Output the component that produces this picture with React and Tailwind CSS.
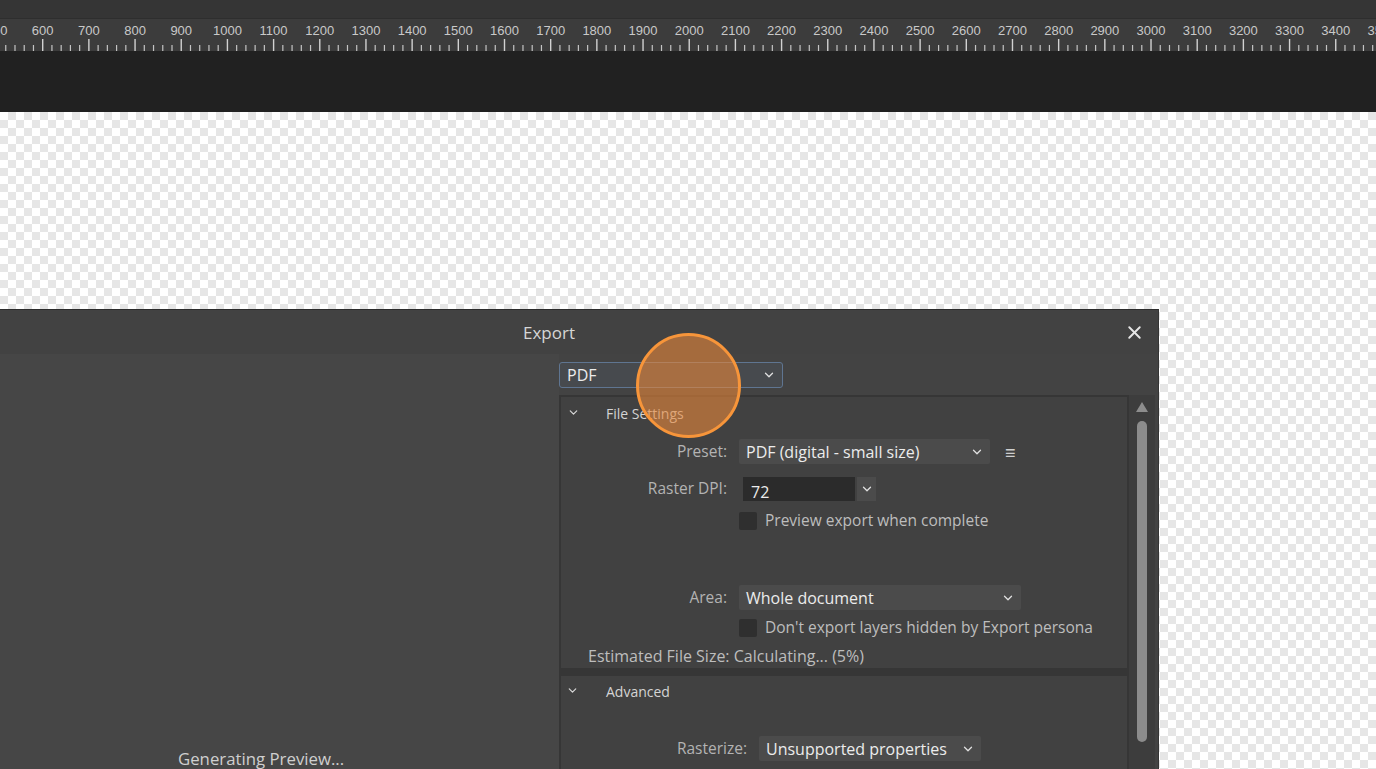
import { ChevronDown, X } from "lucide-react";

const font = { fontFamily: '"Open Sans", "Noto Sans", sans-serif' };

function Ruler() {
    const step = 46.18;
    const first = 42.7 - step; // position of "500"
    const labels = [];
    const ticks = [];
    for (let i = 0; i < 31; i++) {
        const x = first + i * step;
        labels.push(
            <text key={"l" + i} x={x} y={16} textAnchor="middle" fill="#c9c9c9" fontSize="13" fontFamily="Liberation Sans, Arial, sans-serif">
                {(5 + i) * 100}
            </text>
        );
        ticks.push(<line key={"t" + i} x1={x} x2={x} y1={20} y2={32} stroke="#d2d2d2" strokeWidth="1.4" />);
        for (let j = 1; j < 5; j++) {
            const mx = x + (j * step) / 5;
            ticks.push(<line key={"m" + i + "-" + j} x1={mx} x2={mx} y1={26} y2={32} stroke="#c4c4c4" strokeWidth="1.2" />);
        }
    }
    return (
        <svg width="1376" height="32" className="block">
            {labels}
            {ticks}
        </svg>
    );
}

function Select({ value, className, textClass = "" }) {
    return (
        <div className={"flex items-center justify-between bg-[#4b4b4b] rounded-[2px] pl-[7px] pr-[6px] " + className}>
            <span className={"text-[16px] text-[#ececec] leading-none " + textClass}>{value}</span>
            <ChevronDown className="w-[14px] h-[14px] text-[#e0e0e0]" strokeWidth={2.2} />
        </div>
    );
}

function Checkbox({ label }) {
    return (
        <div className="flex items-center gap-[8px]">
            <div className="w-[18px] h-[18px] bg-[#2f2f2f] rounded-[2px]" />
            <span className="text-[15.5px] text-[#bdbdbd] leading-none">{label}</span>
        </div>
    );
}

export default function App() {
    return (
        <div
            className="w-[1376px] h-[769px] overflow-hidden flex flex-col bg-[repeating-conic-gradient(#e6e6e6_0_25%,#ffffff_0_50%)] bg-[length:16px_16px]"
            style={font}
        >
            {/* Top bar + ruler */}
            <div className="h-[19px] bg-[#353535] border-b border-[#2e2e2e] shrink-0" />
            <div className="h-[32px] bg-[#3c3c3c] shrink-0">
                <Ruler />
            </div>
            <div className="h-[61px] bg-[#212121] shrink-0" />

            {/* Export dialog */}
            <div className="mt-[197px] w-[1159px] h-[460px] shrink-0 bg-[#434343] border-t border-[#2c2c2c] border-r border-r-[#353535] flex flex-col overflow-hidden">
                <div className="h-[44px] shrink-0 bg-[#424242] flex items-center relative">
                    <span className="ml-[523px] mt-[2px] text-[17px] text-[#d6d6d6]">Export</span>
                    <X className="absolute left-[1124px] top-[12px] w-[21px] h-[21px] text-[#e6e6e6]" strokeWidth={2.2} />
                </div>

                <div className="flex flex-1 min-h-0">
                    {/* Preview */}
                    <div className="w-[559px] shrink-0 bg-[#464646] flex flex-col">
                        <div className="mt-[394px] pl-[178px] text-[16.8px] text-[#cfcfcf] leading-[22px]">Generating Preview...</div>
                    </div>

                    {/* Settings column */}
                    <div className="flex-1 flex flex-col">
                        <div className="mt-[8px] w-[224px] h-[26px] rounded-[3px] border border-[#5f7591] bg-[#474a4e] flex items-center justify-between pl-[7px] pr-[6px]">
                            <span className="text-[16px] text-[#ececec] leading-none">PDF</span>
                            <ChevronDown className="w-[14px] h-[14px] text-[#e0e0e0]" strokeWidth={2.2} />
                        </div>

                        <div className="mt-[7px] flex flex-1 min-h-0">
                            <div className="w-[570px] bg-[#363636] pl-[2px] pr-[2px] pt-[2px] flex flex-col gap-[8px]">
                                {/* File Settings */}
                                <div className="h-[271px] bg-[#414141] flex flex-col">
                                    <div className="h-[31px] flex items-center">
                                        <ChevronDown className="ml-[6px] w-[13px] h-[13px] text-[#d8d8d8]" strokeWidth={2.2} />
                                        <span className="ml-[26px] mt-[2px] text-[14px] text-[#d4d4d4]">File Settings</span>
                                    </div>
                                    <div className="mt-[11px] flex items-center">
                                        <span className="w-[166px] text-right text-[15.5px] text-[#b3b3b3] leading-none">Preset:</span>
                                        <Select value="PDF (digital - small size)" className="ml-[12px] w-[251px] h-[25px]" />
                                        <span className="ml-[15px] text-[18px] text-[#cfcfcf] leading-none">≡</span>
                                    </div>
                                    <div className="mt-[13px] flex items-center">
                                        <span className="w-[166px] text-right text-[15.5px] text-[#b3b3b3] leading-none">Raster DPI:</span>
                                        <div className="ml-[16px] w-[112px] h-[24px] bg-[#2b2b2b] flex items-end pl-[8px] pb-[1px]">
                                            <span className="text-[16px] text-[#ececec] leading-none">72</span>
                                        </div>
                                        <div className="ml-[2px] w-[19px] h-[24px] bg-[#4b4b4b] flex items-center justify-center">
                                            <ChevronDown className="w-[14px] h-[14px] text-[#e0e0e0]" strokeWidth={2.2} />
                                        </div>
                                    </div>
                                    <div className="mt-[11px] ml-[178px]">
                                        <Checkbox label="Preview export when complete" />
                                    </div>
                                    <div className="mt-[55px] flex items-center">
                                        <span className="w-[166px] text-right text-[15.5px] text-[#b3b3b3] leading-none">Area:</span>
                                        <Select value="Whole document" className="ml-[12px] w-[282px] h-[25px]" />
                                    </div>
                                    <div className="mt-[9px] ml-[178px]">
                                        <Checkbox label="Don't export layers hidden by Export persona" />
                                    </div>
                                    <div className="mt-[11px] ml-[27px] text-[16px] text-[#bdbdbd] leading-none">Estimated File Size: Calculating... (5%)</div>
                                </div>

                                {/* Advanced */}
                                <div className="flex-1 bg-[#414141] flex flex-col">
                                    <div className="h-[29px] flex items-center">
                                        <ChevronDown className="ml-[5px] w-[13px] h-[13px] text-[#d8d8d8]" strokeWidth={2.2} />
                                        <span className="ml-[27px] mt-[2px] text-[14px] text-[#d4d4d4]">Advanced</span>
                                    </div>
                                    <div className="mt-[31px] flex items-center">
                                        <span className="w-[186px] text-right text-[15.5px] text-[#b3b3b3] leading-none">Rasterize:</span>
                                        <Select value="Unsupported properties" className="ml-[12px] w-[222px] h-[25px]" />
                                    </div>
                                </div>
                            </div>

                            {/* Scrollbar */}
                            <div className="w-[26px] bg-[#3d3d3d] flex flex-col items-center pt-[7px]">
                                <div className="w-0 h-0 border-l-[6px] border-r-[6px] border-b-[10px] border-l-transparent border-r-transparent border-b-[#8d8d8d]" />
                                <div className="mt-[9px] w-[10px] h-[321px] rounded-full bg-[#8c8c8c]" />
                            </div>
                        </div>
                    </div>
                </div>
            </div>

            {/* Click highlight */}
            <div className="absolute left-[636px] top-[333px] w-[105px] h-[105px] rounded-full border-[3px] border-[#f7953a] bg-[#e8873a]/60 pointer-events-none" />
        </div>
    );
}
